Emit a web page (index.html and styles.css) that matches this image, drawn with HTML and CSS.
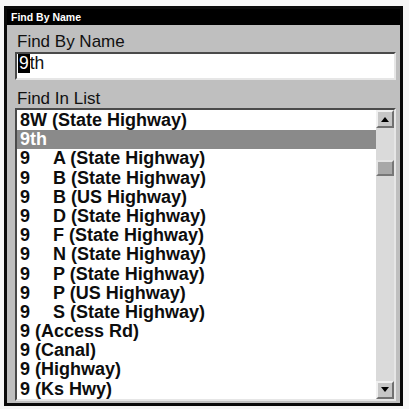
FILE: index.html
```html
<!DOCTYPE html>
<html lang="en">
<head>
  <meta charset="UTF-8" />
  <title>Find By Name</title>
  <link rel="stylesheet" href="styles.css">
</head>
<body>
  <div class="window">
    <div class="titlebar">Find By Name</div>
    <div class="content">
      <div class="label">Find By Name</div>
      <div class="field"><span class="cursor">9</span>th</div>

      <div class="label second">Find In List</div>
      <div class="listbox">
        <div class="rows">
          <div class="row">8W (State Highway)</div>
          <div class="row selected">9th</div>
          <div class="row"><span class="num">9</span>A (State Highway)</div>
          <div class="row"><span class="num">9</span>B (State Highway)</div>
          <div class="row"><span class="num">9</span>B (US Highway)</div>
          <div class="row"><span class="num">9</span>D (State Highway)</div>
          <div class="row"><span class="num">9</span>F (State Highway)</div>
          <div class="row"><span class="num">9</span>N (State Highway)</div>
          <div class="row"><span class="num">9</span>P (State Highway)</div>
          <div class="row"><span class="num">9</span>P (US Highway)</div>
          <div class="row"><span class="num">9</span>S (State Highway)</div>
          <div class="row">9 (Access Rd)</div>
          <div class="row">9 (Canal)</div>
          <div class="row">9 (Highway)</div>
          <div class="row">9 (Ks Hwy)</div>
        </div>
        <div class="scrollbar">
          <div class="arrow up"></div>
          <div class="thumb"></div>
          <div class="arrow down"></div>
        </div>
      </div>
    </div>
  </div>
</body>
</html>
```

FILE: styles.css
```css
body {
  margin: 0;
  background: #f7f7f7;
  font-family: "Liberation Sans", Arial, sans-serif;
}
.window {
  margin: 6px 0 0 4px;
  width: 393px;
  height: 394px;
  border: 3px solid #0a0a0a;
  background: #bfbfbf;
  display: flex;
  flex-direction: column;
}
.titlebar {
  height: 16px;
  line-height: 16px;
  background: #000;
  color: #fff;
  font-size: 10.5px;
  font-weight: bold;
  padding-left: 4px;
}
.content {
  flex: 1;
  padding: 8px 4px 6px 8px;
  display: flex;
  flex-direction: column;
}
.label {
  font-size: 17px;
  line-height: 18px;
  color: #111;
  padding-left: 2px;
  margin-bottom: 1px;
}
.label.second {
  margin-top: 10px;
  margin-bottom: 0;
}
.field {
  height: 24px;
  background: #fff;
  border-top: 2px solid #4a4a4a;
  border-left: 2px solid #4a4a4a;
  border-right: 2px solid #e6e6e6;
  border-bottom: 2px solid #e6e6e6;
  font-size: 17.5px;
  line-height: 19px;
  color: #111;
  padding-left: 1px;
}
.cursor {
  display: inline-block;
  background: #000;
  color: #fff;
  padding: 0 1px;
}
/* list with its scroll column */
.listbox {
  flex: 1;
  display: flex;
  min-height: 0;
  background: #fff;
  border-top: 2px solid #4a4a4a;
  border-left: 2px solid #4a4a4a;
  border-right: 2px solid #e6e6e6;
  border-bottom: 2px solid #e6e6e6;
}
.rows {
  flex: 1;
  overflow: hidden;
  padding-top: 1px;
}
.row {
  height: 19.2px;
  line-height: 19.2px;
  font-size: 18px;
  font-weight: bold;
  color: #0d0d0d;
  padding-left: 3px;
  white-space: nowrap;
}
.row.selected {
  background: #8a8a8a;
  color: #fff;
}
.num {
  display: inline-block;
  width: 33px;
}
.scrollbar {
  width: 18px;
  background: #dadada;
  display: flex;
  flex-direction: column;
}
.arrow {
  height: 14px;
  width: 14px;
  background: #c6c6c6;
  border-top: 2px solid #f0f0f0;
  border-left: 2px solid #f0f0f0;
  border-right: 2px solid #707070;
  border-bottom: 2px solid #707070;
  display: flex;
  align-items: center;
  justify-content: center;
}
.arrow::after {
  content: "";
  border-left: 4px solid transparent;
  border-right: 4px solid transparent;
}
.arrow.up::after {
  border-bottom: 5px solid #000;
}
.arrow.down {
  margin-top: auto;
}
.arrow.down::after {
  border-top: 5px solid #000;
}
.thumb {
  margin-top: 32px;
  height: 12px;
  background: #a8a8a8;
  border-top: 2px solid #e4e4e4;
  border-left: 2px solid #e4e4e4;
  border-right: 2px solid #777;
  border-bottom: 2px solid #777;
}
```
